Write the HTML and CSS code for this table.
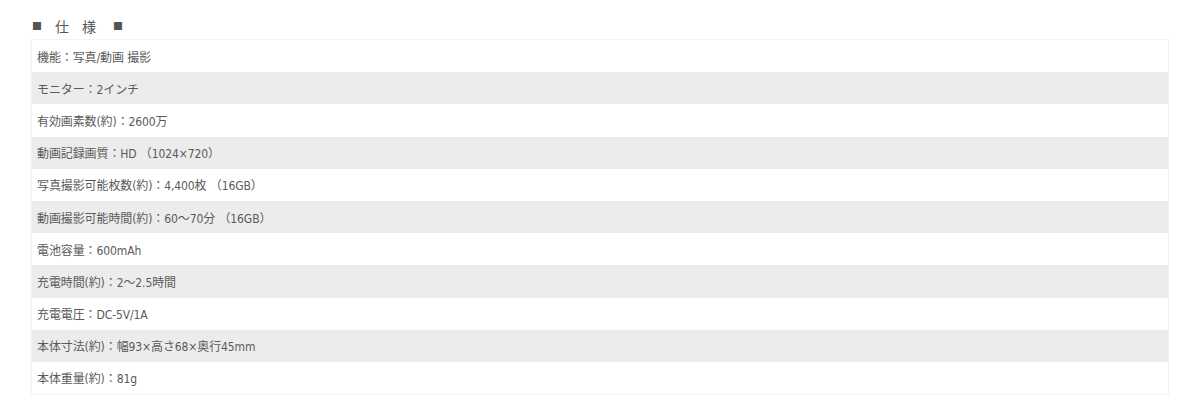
FILE: index.html
```html
<!DOCTYPE html>
<html lang="ja">
<head>
<meta charset="utf-8">
<link rel="stylesheet" href="styles.css">
</head>
<body>
<div class="spec">
  <h2 class="spec-title"><span class="sq">■</span><span class="ch">仕</span><span class="ch">様</span><span class="sq">■</span></h2>
  <div class="spec-table">
    <div class="row">機能：写真/動画 撮影</div>
    <div class="row alt">モニター：2インチ</div>
    <div class="row">有効画素数(約)：2600万</div>
    <div class="row alt">動画記録画質：HD （1024×720）</div>
    <div class="row">写真撮影可能枚数(約)：4,400枚 （16GB）</div>
    <div class="row alt">動画撮影可能時間(約)：60～70分 （16GB）</div>
    <div class="row">電池容量：600mAh</div>
    <div class="row alt">充電時間(約)：2～2.5時間</div>
    <div class="row">充電電圧：DC-5V/1A</div>
    <div class="row alt">本体寸法(約)：幅93×高さ68×奥行45mm</div>
    <div class="row">本体重量(約)：81g</div>
  </div>
</div>
</body>
</html>
```
FILE: styles.css
```css
html, body {
  margin: 0;
  padding: 0;
  background: #ffffff;
}
body {
  font-family: "DejaVu Sans Condensed", "Noto Sans CJK JP", sans-serif;
  color: #5a5a5a;
}
.spec {
  width: 1138px;
  padding: 13px 0 0 31px;
}
.spec-title {
  margin: 0;
  height: 26px;
  display: flex;
  align-items: center;
  font-family: "Noto Sans CJK JP", sans-serif;
  font-size: 14px;
  font-weight: normal;
  line-height: 16px;
  color: #555555;
}
.spec-title .sq {
  display: inline-block;
  flex: none;
  width: 10px;
  text-align: center;
  font-size: 10px;
}
.spec-title .ch {
  display: inline-block;
  flex: none;
  width: 14px;
  text-align: center;
}
.spec-title .sq:first-child {
  margin-left: 1px;
  margin-right: 13px;
}
.spec-title .ch:nth-child(2) {
  margin-right: 13px;
}
.spec-title .ch:nth-child(3) {
  margin-right: 17px;
}
.spec-table {
  border: 1px solid #f3f3f3;
  box-shadow: -4px 0 0 -3px #f6f6f6;
}
.row {
  height: 32.2px;
  display: flex;
  align-items: center;
  padding-left: 5px;
  font-size: 12px;
  letter-spacing: -0.1px;
  color: #5a5a5a;
  background: #ffffff;
}
.row.alt {
  background: #ececec;
}
```
